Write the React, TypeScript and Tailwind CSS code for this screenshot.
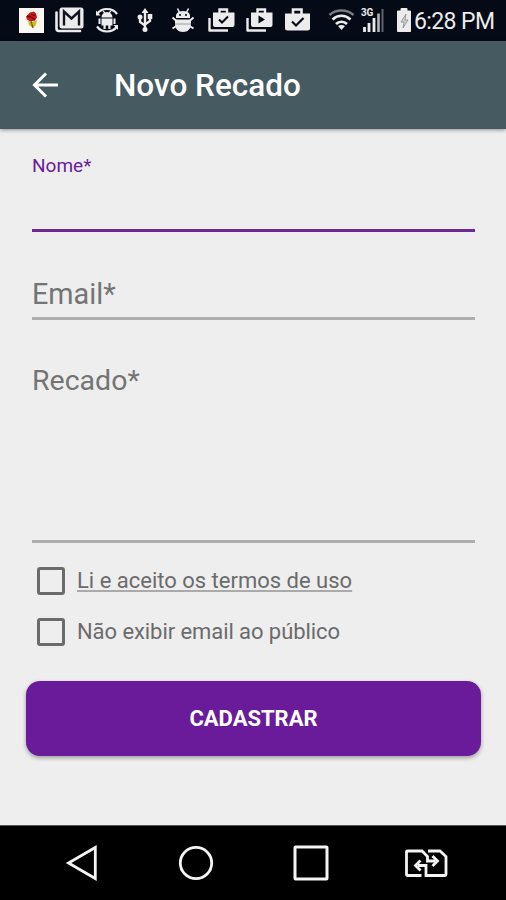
import { useState } from "react";
import type { ReactNode } from "react";

const StatusIcon = ({ width = 38, children }: { width?: number; children: ReactNode }) => (
  <svg width={width} height="41" viewBox={`0 0 ${width} 41`} fill="none" className="shrink-0">
    {children}
  </svg>
);

const StatusBar = () => (
  <div className="flex h-[41px] shrink-0 items-center bg-[#050a17] pl-3 text-[#ececec]">
    {/* Rose */}
    <StatusIcon>
      <rect x="7" y="8" width="25" height="25" fill="#fbf8f4" />
      <path d="M18 12.500l4-1 2 2 1 4-2 3-5 1-3-2-1-3z" fill="#d3141b" />
      <path d="M15 16l4 1 4 3M19 14l4 2" stroke="#5f0c10" strokeWidth="1.3" />
      <path d="M16 21l4 1 5-2-1 5-3 3-4-3z" fill="#d1b91f" />
      <path d="M19 21l2 7" stroke="#6a5f16" strokeWidth="1.2" />
    </StatusIcon>
    {/* Gmail */}
    <StatusIcon>
      <path d="M6.500 12.500V28.500q0 2.500 2.500 2.500h21" stroke="currentColor" strokeWidth="2.600" strokeLinecap="round" />
      <rect x="9.500" y="7.500" width="24" height="21" rx="2.500" fill="currentColor" />
      <path d="M14 25.500V11.500L21.500 18.500l7.500-7v14" stroke="#11151f" strokeWidth="2.400" />
    </StatusIcon>
    {/* Android with rotating arrows */}
    <StatusIcon>
      <path d="M9 14C11.500 10.500 14.500 9 19 9s7.500 1.500 10 5M9 26.500c2.500 3.500 5.500 5 10 5s7.500-1.500 10-5" stroke="currentColor" strokeWidth="2.200" />
      <path d="M8 10.500v5h4.500zM30 30v-5h-4.500z" fill="currentColor" />
      <path d="M13.500 17.500a5.500 5.500 0 0 1 11 0z" fill="currentColor" />
      <path d="M13.500 18.500h11v7h-2v3.500h-2.200v-3.500h-2.600v3.500h-2.200v-3.500h-2zM10.500 18.500h2v5.500h-2zM25.500 18.500h2v5.500h-2z" fill="currentColor" />
      <path d="M15 11l2 2M23 11l-2 2" stroke="currentColor" strokeWidth="1.200" />
    </StatusIcon>
    {/* USB */}
    <StatusIcon>
      <path d="M19 11v18M14 17v5l5 3.500M24 16v5L19 24.500" stroke="currentColor" strokeWidth="2.400" />
      <path d="M19 8l3.500 5h-7z" fill="currentColor" />
      <circle cx="19" cy="29.500" r="2.500" fill="currentColor" />
      <circle cx="14" cy="17" r="2.500" fill="currentColor" />
      <rect x="21.700" y="14" width="4.600" height="5" fill="currentColor" />
    </StatusIcon>
    {/* Android debug */}
    <StatusIcon>
      <path d="M13.500 8.500l2 4M24.500 8.500l-2 4" stroke="currentColor" strokeWidth="1.600" />
      <path d="M12 18v-3c1-3 4-4 7-4s6 1 7 4v3z" fill="currentColor" />
      <path d="M11 19.500h16v4c0 5-3 8.500-8 8.500s-8-3.500-8-8.500z" fill="currentColor" />
      <path d="M8.500 17.500l4 3.500M29.500 17.500L25.500 21M8.500 28.500l4-2.500M29.500 28.500l-4-2.500" stroke="currentColor" strokeWidth="2" />
      <path d="M11 24h16" stroke="#999ca3" strokeWidth="1" />
      <circle cx="16" cy="15" r="1" fill="#050a17" />
      <circle cx="22" cy="15" r="1" fill="#050a17" />
    </StatusIcon>
    {/* Updated apps */}
    <StatusIcon>
      <path d="M7.500 18V30.500h18.500" stroke="currentColor" strokeWidth="2.400" strokeLinejoin="round" />
      <path d="M17.500 13v-3.500h7.500V13" stroke="currentColor" strokeWidth="2.400" />
      <path d="M11 12.500h21.500v12.500q0 2-2 2H13q-2 0-2-2z" fill="currentColor" />
      <path d="M17 19.500l3 3 6-6" stroke="#050a17" strokeWidth="2" />
    </StatusIcon>
    {/* Play store */}
    <StatusIcon>
      <path d="M7.500 18V30.500h18.500" stroke="currentColor" strokeWidth="2.400" strokeLinejoin="round" />
      <path d="M17.500 13v-3.500h7.500V13" stroke="currentColor" strokeWidth="2.400" />
      <path d="M11 12.500h21.500v12.500q0 2-2 2H13q-2 0-2-2z" fill="currentColor" />
      <path d="M18.500 15.500v8l6.500-4z" fill="#050a17" />
    </StatusIcon>
    <StatusIcon>
      <path d="M15 14v-4.500h8.500V14" stroke="currentColor" strokeWidth="2.600" />
      <path d="M7 13.500h25v14.500q0 2.500-2.500 2.500H9.500Q7 30.500 7 28z" fill="currentColor" />
      <path d="M14 21.500l4 4 7.500-7.500" stroke="#050a17" strokeWidth="2.200" />
    </StatusIcon>
    {/* Wifi */}
    <StatusIcon width={42}>
      <path d="M13.500 15C20 9 31 9 37.500 15" stroke="#777b82" strokeWidth="2.400" />
      <path d="M16.500 19.500c5.500-5 12.500-5 18 0M20 24c3-3 8-3 11 0" stroke="currentColor" strokeWidth="2.700" />
      <path d="M22 26q3.500-2 7 0l-3.500 4z" fill="currentColor" />
    </StatusIcon>
    {/* Mobile signal */}
    <div className="relative h-[41px] w-[30px] shrink-0">
      <StatusIcon width={30}>
        <path d="M6.500 27v5M11 23v9M16 18v14" stroke="currentColor" strokeWidth="2.800" />
        <path d="M20.500 13.500V32" stroke="#b4b6ba" strokeWidth="2.600" />
        <path d="M24.500 9v23" stroke="#5d626b" strokeWidth="2" />
      </StatusIcon>
      <span className="absolute left-[3px] top-[8px] text-[10px] font-bold leading-[10px] tracking-tight">3G</span>
    </div>
    {/* Battery */}
    <StatusIcon width={30}>
      <path d="M9.500 11h3.500V8.500h6V11h3.500v20.500h-13z" fill="currentColor" stroke="currentColor" strokeLinejoin="round" />
      <path d="M18 14l-5 8h3l-1 6 5-8h-3z" fill="#d0d0d0" stroke="#8c8c8c" strokeWidth=".8" />
    </StatusIcon>
    <span className="-ml-1 mt-0.5 whitespace-nowrap text-[23px] leading-none tracking-[-0.6px]">6:28 PM</span>
  </div>
);

const NavigationBar = () => (
  <div className="flex h-[75px] shrink-0 items-center border-t border-[#555] bg-black pl-[65px] text-[#f4f4f4]">
    <button aria-label="Voltar">
      <svg width="32" height="36" viewBox="0 0 32 36" fill="none" stroke="currentColor" strokeWidth="2.800">
        <path d="M30.300 2.500v31L3.500 18z" />
      </svg>
    </button>
    <button aria-label="Início" className="ml-[81px]">
      <svg width="36" height="36" viewBox="0 0 36 36" fill="none" stroke="currentColor" strokeWidth="2.800">
        <circle cx="18" cy="18" r="15.700" />
      </svg>
    </button>
    <button aria-label="Recentes" className="ml-[79px]">
      <svg width="36" height="36" viewBox="0 0 36 36" fill="none" stroke="currentColor" strokeWidth="3">
        <rect x="2" y="2" width="32" height="32" rx=".5" />
      </svg>
    </button>
    <button aria-label="Trocar SIM" className="ml-[75px]">
      <svg width="44" height="29" viewBox="0 0 44 29" fill="none" stroke="currentColor" strokeWidth="2.800">
        <path d="M17.500 26.500H3.500q-1 0-1-1V3q0-1 1-1h14.500l5.500 5.500V12h8" />
        <path d="M24 2h12l6 5.500V25.500q0 1-1 1H22V16.500h-8" />
        <path d="M28.500 7l5 5-5 5M16.500 11.500l-5 5 5 5" />
      </svg>
    </button>
  </div>
);

const App = () => {
  const [checked, setChecked] = useState<string[]>([]);

  const toggle = (id: string) => {
    setChecked((prev) => (prev.includes(id) ? prev.filter((item) => item !== id) : [...prev, id]));
  };

  const options = [
    { id: "termos", label: "Li e aceito os termos de uso", link: true },
    { id: "publico", label: "Não exibir email ao público", link: false },
  ];

  return (
    <div className="flex h-[900px] w-[506px] flex-col overflow-hidden bg-[#eeeeee] font-['Roboto',sans-serif]">
      <StatusBar />

      {/* App bar */}
      <header className="z-10 flex h-[88px] shrink-0 items-center bg-[#465a62] pl-8 pb-px text-white shadow-[0_1px_4px_rgba(0,0,0,0.4)]">
        <button aria-label="Voltar">
          <svg width="27" height="28" viewBox="0 0 27 28" fill="none" stroke="currentColor" strokeWidth="3">
            <path d="M26 14H3M14 2.500L2.500 14 14 25.500" />
          </svg>
        </button>
        <h1 className="ml-[55px] mt-[3px] text-[31.500px] font-medium leading-none">Novo Recado</h1>
      </header>

      <main className="flex flex-1 flex-col px-8">
        <div className="mr-[-1px] flex h-[103px] flex-col border-b-[3px] border-[#6a2c94] pt-[27px]">
          <label className="text-[19px] leading-5 text-[#6a1b9a]">Nome*</label>
        </div>
        <div className="mr-[-1px] flex h-[88px] flex-col justify-end border-b-[3px] border-[#adadad] pb-[7px]">
          <label className="text-[28.800px] leading-8 text-[#747474]">Email*</label>
        </div>
        <div className="mr-[-1px] flex h-[223px] flex-col border-b-[3px] border-[#adadad] pt-[45px]">
          <label className="text-[28.500px] leading-8 text-[#747474]">Recado*</label>
        </div>

        <div className="mt-3 flex flex-col">
          {options.map((option) => (
            <button key={option.id} onClick={() => toggle(option.id)} className="flex h-[51px] items-center text-left">
              <span className="ml-[5px] flex size-7 items-center justify-center rounded-[3px] border-[3px] border-[#6b6b6b]">
                {checked.includes(option.id) && <span className="size-4 bg-[#6a1b9a]" />}
              </span>
              <span
                className={`ml-3 text-[22px] text-[#6b6b6b] ${
                  option.link
                    ? "underline decoration-[#aaaaaa] decoration-2 underline-offset-[2px] [text-decoration-skip-ink:none]"
                    : "tracking-[-0.07px]"
                }`}
              >
                {option.label}
              </span>
            </button>
          ))}
        </div>

        <button className="ml-[-6px] mr-[-7px] mt-6 h-[75px] rounded-[14px] bg-[#6a1b9a] text-[22px] font-bold text-white shadow-[0_2px_4px_rgba(0,0,0,0.35)]">
          CADASTRAR
        </button>
      </main>

      <NavigationBar />
    </div>
  );
};

export default App;
